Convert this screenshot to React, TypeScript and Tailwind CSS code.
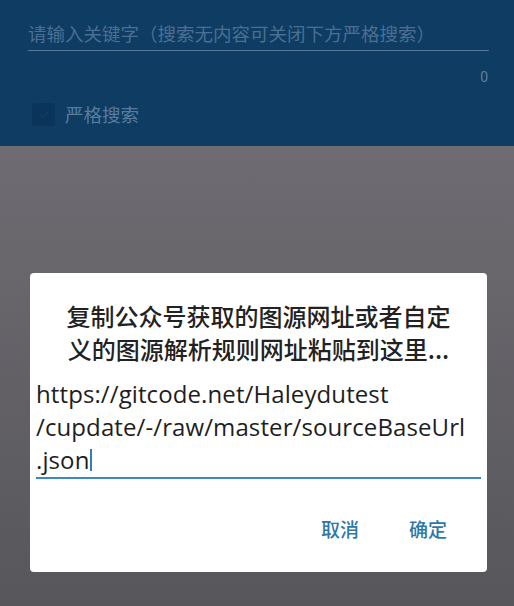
import React from "react";

export default function App() {
  const cjk = { fontFamily: '"Noto Sans CJK SC", "Noto Sans", sans-serif' };
  return (
    <div className="w-[514px] h-[606px] flex flex-col overflow-hidden" style={cjk}>
      <div className="h-[146px] bg-[#0e3c63] flex flex-col px-[28px] pt-[20px] shrink-0">
        <div className="border-b border-[#56799b] pb-[3px] mr-[-3px]">
          <div className="text-[18.5px] leading-[27px] text-[#4b6f92] whitespace-nowrap">
            请输入关键字（搜索无内容可关闭下方严格搜索）
          </div>
        </div>
        <div className="flex justify-end pt-[17px] mr-[-2px]">
          <span className="text-[14px] leading-[18px] text-[#5f7f9f]" style={{ fontFamily: 'Roboto, sans-serif' }}>0</span>
        </div>
        <div className="flex items-center gap-[10px] mt-[16px] ml-[4px]">
          <div className="w-[23px] h-[23px] rounded-[3px] bg-[#0a3459] flex items-center justify-center">
            <svg width="14" height="14" viewBox="0 0 14 14">
              <path d="M3 7.5 L6 10.5 L11.5 4" stroke="#103d66" strokeWidth="1.6" fill="none" />
            </svg>
          </div>
          <span className="text-[18.5px] leading-[24px] text-[#587c9e]">严格搜索</span>
        </div>
      </div>
      <div className="flex-1 bg-gradient-to-b from-[#6f6b72] to-[#57575b] px-[30px] pt-[127px] pr-[27px]">
        <div className="bg-white rounded-[4px] h-[299px] flex flex-col">
          <div className="pt-[26px] px-[20px] text-center text-[24px] leading-[33px] font-medium text-[#222222]">
            <div>复制公众号获取的图源网址或者自定</div>
            <div>义的图源解析规则网址粘贴到这里...</div>
          </div>
          <div className="mx-[6px] mt-[12px] border-b-2 border-[#3d88c4] pb-[1px]">
            <div
              className="text-[24px] leading-[33px] text-[#1e1e1e] whitespace-nowrap tracking-[0.1px]"
              style={{ fontFamily: '"Open Sans", sans-serif' }}
            >
              <div>https://gitcode.net/Haleydutest</div>
              <div>/cupdate/-/raw/master/sourceBaseUrl</div>
              <div className="flex items-center">
                <span>.json</span>
                <span className="inline-block w-[2px] h-[22px] bg-[#2f7fc0] ml-[1px]" />
              </div>
            </div>
          </div>
          <div className="flex justify-end gap-[50px] pr-[40px] mt-[38px]">
            <span className="text-[19px] leading-[24px] font-medium text-[#2e77a8]">取消</span>
            <span className="text-[19px] leading-[24px] font-medium text-[#2e77a8]">确定</span>
          </div>
        </div>
      </div>
    </div>
  );
}
